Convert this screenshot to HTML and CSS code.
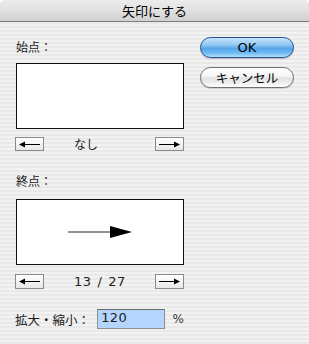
FILE: index.html
```html
<!DOCTYPE html>
<html lang="ja">
<head>
<meta charset="utf-8">
<title>矢印にする</title>
<link rel="stylesheet" href="styles.css">
</head>
<body>
<div class="window">
  <div class="titlebar">矢印にする</div>
  <div class="content">
    <div class="left">
      <div class="label first">始点：</div>
      <div class="preview first-box"></div>
      <div class="nav first-nav">
        <button class="navbtn" type="button" aria-label="前へ">
          <svg width="21" height="7" viewBox="0 0 21 7"><line x1="5" y1="3.5" x2="21" y2="3.5" stroke="#000" stroke-width="1.2"/><polygon points="0,3.5 6,0.5 6,6.5" fill="#000"/></svg>
        </button>
        <span class="navtext">なし</span>
        <button class="navbtn" type="button" aria-label="次へ">
          <svg width="21" height="7" viewBox="0 0 21 7"><line x1="0" y1="3.5" x2="16" y2="3.5" stroke="#000" stroke-width="1.2"/><polygon points="21,3.5 15,0.5 15,6.5" fill="#000"/></svg>
        </button>
      </div>
      <div class="label second">終点：</div>
      <div class="preview second-box">
        <svg width="64" height="14" viewBox="0 0 64 14"><line x1="0" y1="7" x2="44" y2="7" stroke="#6e6e6e" stroke-width="1.6"/><polygon points="42,1 64,7 42,13" fill="#000"/></svg>
      </div>
      <div class="nav second-nav">
        <button class="navbtn" type="button" aria-label="前へ">
          <svg width="21" height="7" viewBox="0 0 21 7"><line x1="5" y1="3.5" x2="21" y2="3.5" stroke="#000" stroke-width="1.2"/><polygon points="0,3.5 6,0.5 6,6.5" fill="#000"/></svg>
        </button>
        <span class="navtext num">13 / 27</span>
        <button class="navbtn" type="button" aria-label="次へ">
          <svg width="21" height="7" viewBox="0 0 21 7"><line x1="0" y1="3.5" x2="16" y2="3.5" stroke="#000" stroke-width="1.2"/><polygon points="21,3.5 15,0.5 15,6.5" fill="#000"/></svg>
        </button>
      </div>
      <div class="scale">
        <span class="scale-label">拡大・縮小：</span>
        <span class="field">120</span>
        <span class="pct">%</span>
      </div>
    </div>
    <div class="right">
      <button class="aqua ok" type="button">OK</button>
      <button class="aqua cancel" type="button">キャンセル</button>
    </div>
  </div>
</div>
</body>
</html>
```
FILE: styles.css
```css
html, body {
  margin: 0;
  padding: 0;
  background: #ffffff;
}
body {
  width: 309px;
  height: 344px;
  overflow: hidden;
  font-family: "DejaVu Sans", "Noto Sans CJK JP", sans-serif;
  color: #000;
}
.window {
  width: 309px;
  height: 344px;
  border-radius: 5px 5px 0 0;
  overflow: hidden;
  background: repeating-linear-gradient(to bottom, #f2f2f2 0px, #f2f2f2 2px, #e9e9e9 2px, #e9e9e9 4px);
}
.titlebar {
  height: 21px;
  line-height: 21px;
  border-bottom: 1px solid #7d7d7d;
  background: linear-gradient(to bottom, #ececec 0%, #e1e1e1 50%, #d0d0d0 100%);
  text-align: center;
  font-family: "Noto Sans CJK JP", sans-serif;
  font-size: 13px;
  color: #000;
}
.content {
  display: flex;
  padding-left: 16px;
}
.left {
  width: 168px;
  display: flex;
  flex-direction: column;
}
.label {
  height: 18px;
  line-height: 18px;
  font-family: "Noto Sans CJK JP", sans-serif;
  font-size: 12px;
  color: #1a1a1a;
}
.label.first { margin-top: 16px; }
.label.second { margin-top: 21px; }
.preview {
  box-sizing: border-box;
  width: 168px;
  background: #fff;
  border: 1.5px solid #111;
  display: flex;
  align-items: center;
  justify-content: center;
}
.first-box { margin-top: 7px; height: 66px; }
.second-box { margin-top: 9px; height: 66px; }
.nav {
  display: flex;
  align-items: center;
  height: 14px;
}
.first-nav { margin-top: 8px; }
.second-nav { margin-top: 9px; height: 15px; }
.navbtn {
  box-sizing: border-box;
  width: 29px;
  height: 100%;
  padding: 0;
  margin: 0;
  border: 1px solid #8a8a8a;
  background: linear-gradient(to bottom, #ffffff 0%, #f4f4f4 50%, #e6e6e6 100%);
  display: flex;
  align-items: center;
  justify-content: center;
}
.navbtn:first-child { margin-left: -1px; }
.navtext {
  flex: 1;
  padding-left: 30px;
  font-family: "Noto Sans CJK JP", sans-serif;
  font-size: 12px;
  line-height: 14px;
  color: #1a1a1a;
}
.navtext.num {
  font-family: "DejaVu Sans", sans-serif;
  font-size: 13px;
  letter-spacing: 0.6px;
  word-spacing: 1px;
  color: #222;
}
.scale {
  margin-top: 20px;
  display: flex;
  align-items: center;
  height: 20px;
}
.scale-label {
  margin-left: -1px;
  width: 83px;
  font-family: "Noto Sans CJK JP", sans-serif;
  font-size: 12.5px;
  color: #1a1a1a;
}
.field {
  box-sizing: border-box;
  width: 68px;
  height: 20px;
  border: 1px solid #8e8e8e;
  border-top-color: #6a6a6a;
  background: #b4d5fe;
  font-family: "DejaVu Sans", sans-serif;
  font-size: 13px;
  line-height: 16px;
  padding-left: 3px;
  letter-spacing: 0.4px;
  color: #222;
}
.pct {
  margin-left: 8px;
  font-family: "DejaVu Sans", sans-serif;
  font-size: 12px;
  color: #333;
}
.right {
  margin-left: 16px;
  display: flex;
  flex-direction: column;
}
.aqua {
  box-sizing: border-box;
  width: 94px;
  height: 21px;
  border-radius: 10.5px;
  padding: 0;
  font-size: 13px;
  font-weight: normal;
  line-height: 18px;
  color: #000;
}
.ok {
  margin-top: 15px;
  border: 1px solid #24508f;
  background: linear-gradient(to bottom, #c6e4fc 0%, #93c9f3 35%, #57a6ea 55%, #72bcf4 80%, #b0e0fd 100%);
  font-family: "DejaVu Sans", sans-serif;
  box-shadow: 0 1px 1px rgba(0,0,0,0.2);
}
.cancel {
  margin-top: 9px;
  border: 1px solid #6f6f6f;
  background: linear-gradient(to bottom, #ffffff 0%, #f6f6f6 40%, #e2e2e2 55%, #f0f0f0 80%, #ffffff 100%);
  font-family: "Noto Sans CJK JP", sans-serif;
  font-size: 12.5px;
  box-shadow: 0 1px 1px rgba(0,0,0,0.15);
}
```
